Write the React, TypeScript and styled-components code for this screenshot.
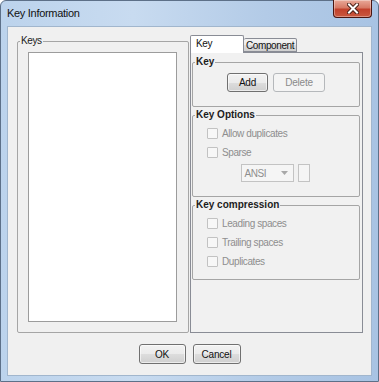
import React from "react";
import styled, { createGlobalStyle } from "styled-components";

const FONT = `"Liberation Sans", Arial, sans-serif`;

const GlobalStyle = createGlobalStyle`
  html, body {
    margin: 0;
    padding: 0;
    background: #ffffff;
  }
  body {
    width: 379px;
    height: 382px;
    overflow: hidden;
    font-family: ${FONT};
  }
  * {
    box-sizing: border-box;
  }
`;

const Window = styled.div`
  width: 379px;
  height: 382px;
  display: flex;
  flex-direction: column;
  padding: 0 6px 5px;
  border: 1px solid #5d7088;
  border-radius: 6px 6px 0 0;
  background: linear-gradient(90deg, #bcd3ec 0%, #c8dbf0 35%, #b3cbe7 70%, #a8c3e3 100%);
`;

const TitleBar = styled.div`
  height: 25px;
  display: flex;
  align-items: flex-start;
  justify-content: space-between;
`;

const Title = styled.div`
  font-size: 11px;
  line-height: 25px;
  letter-spacing: -0.3px;
  color: #111111;
`;

const CloseButton = styled.div`
  width: 39px;
  height: 18px;
  margin-top: -1px;
  display: flex;
  align-items: center;
  justify-content: center;
  border: 1px solid #4a1510;
  border-top: none;
  border-radius: 0 0 4px 4px;
  background: linear-gradient(180deg, #e9a999 0%, #d77a66 45%, #c2412c 55%, #c9583f 100%);
  box-shadow: inset 0 0 0 1px rgba(255, 255, 255, 0.35);
`;

const Client = styled.div`
  flex: 1;
  display: flex;
  flex-direction: column;
  background: #f0f0f0;
  border: 1px solid #a1b6cd;
`;

const Body = styled.div`
  height: 306px;
  display: flex;
  gap: 1px;
  padding: 8px 8px 0 9px;
`;

const GroupBox = styled.fieldset<{ $width?: number; $bottom: number }>`
  margin: 0;
  padding: 0 0 ${(p) => p.$bottom}px;
  min-width: 0;
  ${(p) => (p.$width ? `width: ${p.$width}px;` : "")}
  display: flex;
  flex-direction: column;
  border: 1px solid #a5a5a5;
  border-radius: 2px;
`;

const GroupLegend = styled.legend<{ $bold?: boolean }>`
  margin-left: 2px;
  padding: 0 1px;
  font-size: 10px;
  line-height: 12px;
  font-weight: ${(p) => (p.$bold ? 700 : 400)};
  letter-spacing: ${(p) => (p.$bold ? "0" : "-0.4px")};
  color: ${(p) => (p.$bold ? "#1c1c1c" : "#222222")};
`;

const ListBox = styled.div`
  flex: 1;
  margin: 5px 11px 0 10px;
  background: #ffffff;
  border: 1px solid #9c9c9c;
`;

const TabArea = styled.div`
  width: 173px;
  display: flex;
  flex-direction: column;
`;

const TabStrip = styled.div`
  height: 17px;
  display: flex;
  align-items: flex-end;
`;

const Tab = styled.div<{ $active?: boolean; $width: number }>`
  position: relative;
  width: ${(p) => p.$width}px;
  height: ${(p) => (p.$active ? 18 : 14)}px;
  margin-bottom: ${(p) => (p.$active ? -1 : 0)}px;
  padding-left: ${(p) => (p.$active ? 5 : 2)}px;
  font-size: 10px;
  line-height: ${(p) => (p.$active ? 15 : 13)}px;
  letter-spacing: -0.4px;
  color: #111111;
  border: 1px solid #898c95;
  border-bottom: ${(p) => (p.$active ? "none" : "1px solid #898c95")};
  border-left: ${(p) => (p.$active ? "1px solid #898c95" : "none")};
  border-radius: 2px 2px 0 0;
  background: ${(p) =>
    p.$active ? "#ffffff" : "linear-gradient(180deg, #f3f3f3 0%, #ebebeb 50%, #dddddd 51%, #cfcfcf 100%)"};
  z-index: ${(p) => (p.$active ? 1 : 0)};
`;

const TabPanel = styled.div`
  flex: 1;
  display: flex;
  flex-direction: column;
  gap: 2px;
  padding: 3px 2px 0 1px;
  background: #f1f1f1;
  border: 1px solid #898c95;
`;

const ButtonRow = styled.div<{ $top?: number; $gap: number }>`
  display: flex;
  justify-content: center;
  gap: ${(p) => p.$gap}px;
  margin-top: ${(p) => p.$top ?? 0}px;
`;

const PushButton = styled.button<{ $width: number; $height: number }>`
  width: ${(p) => p.$width}px;
  height: ${(p) => p.$height}px;
  padding: 0;
  font-family: ${FONT};
  font-size: 10px;
  letter-spacing: -0.2px;
  color: #111111;
  border: 1px solid #707070;
  border-radius: 3px;
  background: linear-gradient(180deg, #f2f2f2 0%, #ebebeb 50%, #dddddd 51%, #cfcfcf 100%);
  box-shadow: inset 0 0 0 1px rgba(255, 255, 255, 0.6);

  &:disabled {
    color: #8a8a8a;
    border-color: #b5b8bb;
    background: #f4f4f4;
    box-shadow: none;
  }
`;

const OptionList = styled.div<{ $top: number }>`
  display: flex;
  flex-direction: column;
  gap: 6px;
  margin-top: ${(p) => p.$top}px;
  padding-left: 14px;
`;

const CheckRow = styled.label`
  height: 13px;
  display: flex;
  align-items: center;
  gap: 4px;
  font-size: 10px;
  letter-spacing: -0.4px;
  color: #8e8e8e;
`;

const CheckBox = styled.span`
  width: 11px;
  height: 11px;
  flex: none;
  border: 1px solid #c2c2c2;
  border-radius: 1px;
  background: #f7f7f7;
`;

const ComboRow = styled.div`
  display: flex;
  justify-content: center;
  gap: 4px;
  margin-top: 5px;
  padding-right: 2px;
`;

const Combo = styled.div`
  width: 53px;
  height: 18px;
  display: flex;
  align-items: center;
  justify-content: space-between;
  padding: 0 5px 0 3px;
  font-size: 10px;
  letter-spacing: -0.4px;
  color: #8e8e8e;
  border: 1px solid #c3c3c3;
  background: #f5f5f5;
`;

const SpinBox = styled.div`
  width: 12px;
  height: 18px;
  border: 1px solid #c3c3c3;
  background: #f5f5f5;
`;

const CloseGlyph = () => (
  <svg width="12" height="11" viewBox="0 0 12 11">
    <path d="M2 1.5 L10 9.5 M10 1.5 L2 9.5" stroke="#4a2018" strokeWidth="4" strokeLinecap="square" />
    <path d="M2 1.5 L10 9.5 M10 1.5 L2 9.5" stroke="#ffffff" strokeWidth="2" strokeLinecap="square" />
  </svg>
);

const ComboArrow = () => (
  <svg width="7" height="4" viewBox="0 0 7 4">
    <path d="M0 0 H7 L3.5 4 Z" fill="#a8a8a8" />
  </svg>
);

const Check = ({ label }: { label: string }) => (
  <CheckRow>
    <CheckBox />
    {label}
  </CheckRow>
);

export default function App() {
  return (
    <>
      <GlobalStyle />
      <Window>
        <TitleBar>
          <Title>Key Information</Title>
          <CloseButton>
            <CloseGlyph />
          </CloseButton>
        </TitleBar>
        <Client>
          <Body>
            <GroupBox $width={172} $bottom={10}>
              <GroupLegend>Keys</GroupLegend>
              <ListBox />
            </GroupBox>
            <TabArea>
              <TabStrip>
                <Tab $active $width={54}>
                  Key
                </Tab>
                <Tab $width={53}>Component</Tab>
              </TabStrip>
              <TabPanel>
                <GroupBox $bottom={14}>
                  <GroupLegend $bold>Key</GroupLegend>
                  <ButtonRow $top={5} $gap={5}>
                    <PushButton $width={41} $height={19}>
                      Add
                    </PushButton>
                    <PushButton $width={52} $height={19} disabled>
                      Delete
                    </PushButton>
                  </ButtonRow>
                </GroupBox>
                <GroupBox $bottom={14}>
                  <GroupLegend $bold>Key Options</GroupLegend>
                  <OptionList $top={6}>
                    <Check label="Allow duplicates" />
                    <Check label="Sparse" />
                  </OptionList>
                  <ComboRow>
                    <Combo>
                      ANSI
                      <ComboArrow />
                    </Combo>
                    <SpinBox />
                  </ComboRow>
                </GroupBox>
                <GroupBox $bottom={11}>
                  <GroupLegend $bold>Key compression</GroupLegend>
                  <OptionList $top={6}>
                    <Check label="Leading spaces" />
                    <Check label="Trailing spaces" />
                    <Check label="Duplicates" />
                  </OptionList>
                </GroupBox>
              </TabPanel>
            </TabArea>
          </Body>
          <ButtonRow $top={11} $gap={7}>
            <PushButton $width={47} $height={20}>
              OK
            </PushButton>
            <PushButton $width={48} $height={20}>
              Cancel
            </PushButton>
          </ButtonRow>
        </Client>
      </Window>
    </>
  );
}
